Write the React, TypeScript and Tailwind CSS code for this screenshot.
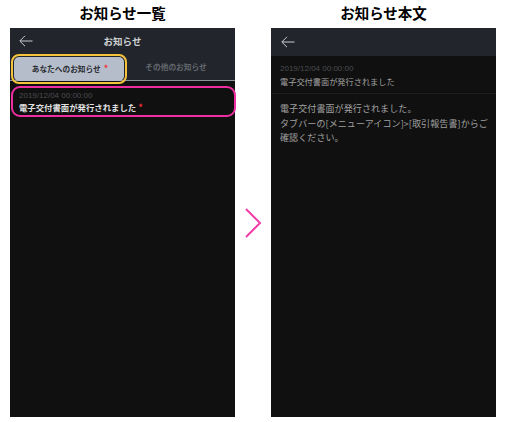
import React from "react";

const font = "font-['Noto_Sans_CJK_JP','Noto_Sans',sans-serif]";

const BackArrow = () => (
  <svg width="14" height="12" viewBox="0 0 14 12" fill="none" stroke="#c9ccd1" strokeWidth="1">
    <path d="M13.5 6H1M6 .8 .8 6 6 11.2" />
  </svg>
);

const App = () => {
  return (
    <div className={`w-[506px] h-[422px] bg-white overflow-hidden flex ${font}`}>
      {/* List screen */}
      <div className="w-[235px] pl-[10px] flex flex-col shrink-0">
        <h2 className="h-[28px] text-center text-[14.5px] leading-[25px] font-bold text-black">お知らせ一覧</h2>
        <div className="w-[225px] h-[389px] bg-[#101010] flex flex-col">
          <div className="h-[26px] bg-[#22262c] flex items-center relative pl-[9px]">
            <BackArrow />
            <span className="absolute inset-x-0 text-center text-[9.5px] font-bold text-[#d0d2d5]">お知らせ</span>
          </div>
          <div className="h-[27px] bg-[#22262c] flex border-b border-[#8d939b] relative">
            <div className="absolute left-[1px] top-0 w-[116px] h-[30px] rounded-[8px] border-[2px] border-[#f5c33b] p-[1px]">
              <div className="w-full h-full rounded-[5px] bg-[#b6bdca] flex items-center justify-center text-[7.7px] font-bold text-[#2a2d33] pl-[2px]">
                あなたへのお知らせ
                <span className="text-[#f0323c] text-[9px] leading-[9px] ml-[3px] -mt-[1px]">*</span>
              </div>
            </div>
            <div className="ml-[107px] flex-1 flex items-center justify-center text-[7.7px] font-bold text-[#62666c]">
              その他のお知らせ
            </div>
          </div>
          <div className="ml-[1px] -mr-[1px] mt-[5px] h-[31px] rounded-[9px] border-[2px] border-[#ee2ea0] pl-[6px] flex flex-col justify-center">
            <span className="text-[8px] leading-[11px] text-[#4a4d50] font-['Liberation_Sans',sans-serif]">2019/12/04 00:00:00</span>
            <span className="text-[8.4px] leading-[13px] font-bold text-[#e0e0e0]">
              電子交付書面が発行されました <span className="text-[#f0323c] text-[9px] leading-[9px]">*</span>
            </span>
          </div>
        </div>
      </div>

      {/* Arrow */}
      <div className="w-[36px] shrink-0 flex items-center justify-center pt-[23px]">
        <svg width="18" height="30" viewBox="0 0 18 30" fill="none" stroke="#f23ea8" strokeWidth="2">
          <path d="M2 1 16 15 2 29" />
        </svg>
      </div>

      {/* Detail screen */}
      <div className="w-[225px] flex flex-col shrink-0">
        <h2 className="h-[28px] text-center text-[14.5px] leading-[25px] font-bold text-black">お知らせ本文</h2>
        <div className="h-[389px] bg-[#101010] flex flex-col">
          <div className="h-[28px] bg-[#22262c] flex items-center pl-[10px]">
            <BackArrow />
          </div>
          <div className="h-[38px] border-b border-[#1d1d1d] pl-[9px] pt-[7px] flex flex-col">
            <span className="text-[8px] leading-[12px] text-[#4a4d50] font-['Liberation_Sans',sans-serif]">2019/12/04 00:00:00</span>
            <span className="text-[8.2px] leading-[13px] text-[#a0a0a0]">電子交付書面が発行されました</span>
          </div>
          <p className="pl-[9px] pr-[4px] pt-[8px] text-[9px] tracking-[0.1px] leading-[14.5px] text-[#a0a0a0]">
            電子交付書面が発行されました。
            <br />
            タブバーの[メニューアイコン]&gt;[取引報告書]からご確認ください。
          </p>
        </div>
      </div>
    </div>
  );
};

export default App;
